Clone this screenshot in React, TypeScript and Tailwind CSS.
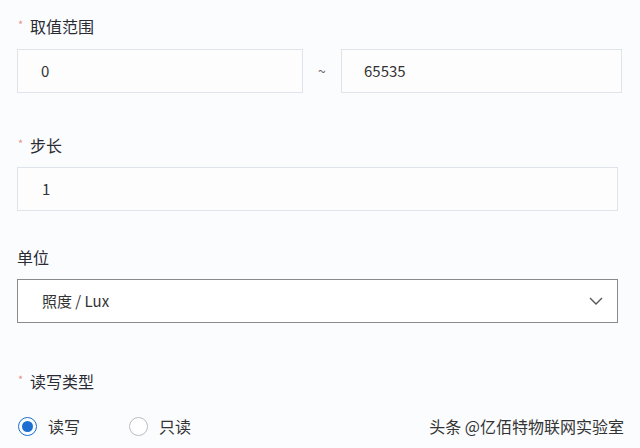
import React from 'react';

const font = { fontFamily: '"Noto Sans CJK SC", "Noto Sans", sans-serif' };

const Label: React.FC<{ text: string; required?: boolean }> = ({ text, required }) => (
    <div className="flex items-center h-[22px] text-[16px] text-[#2a2a33]">
        {required && <span className="text-[#e8928a] text-[11px] w-[13px] pl-[1px] -mt-[4px]">*</span>}
        <span>{text}</span>
    </div>
);

const App: React.FC = () => {
    return (
        <div className="w-[640px] h-[448px] bg-[#fbfcfe] overflow-hidden pl-[17px] pr-[18px] pt-[15px]" style={font}>
            <Label text="取值范围" required />
            <div className="flex items-center mt-[12px]">
                <div className="w-[286px] h-[44px] border border-[#dfe3ea] bg-[#fdfdfe] flex items-center pl-[23px] text-[15px] text-[#333]">0</div>
                <div className="w-[38px] text-center text-[14px] text-[#666]">~</div>
                <div className="w-[281px] h-[44px] border border-[#dfe3ea] bg-[#fdfdfe] flex items-center pl-[22px] text-[15px] text-[#333]">65535</div>
            </div>

            <div className="mt-[41px]">
                <Label text="步长" required />
            </div>
            <div className="mt-[11px] w-[601px] h-[44px] border border-[#dfe3ea] bg-[#fdfdfe] flex items-center pl-[24px] text-[15px] text-[#333]">1</div>

            <div className="mt-[35px]">
                <Label text="单位" />
            </div>
            <div className="mt-[11px] w-[601px] h-[44px] border border-[#8a8a8e] bg-white flex items-center justify-between pl-[24px] pr-[12px] text-[15px] text-[#333]">
                <span>照度 / Lux</span>
                <svg width="18" height="18" viewBox="0 0 18 18" fill="none" stroke="#555" strokeWidth="1.4">
                    <path d="M3 6 L9 12 L15 6" />
                </svg>
            </div>

            <div className="mt-[47px]">
                <Label text="读写类型" required />
            </div>
            <div className="mt-[22px] flex items-center text-[16px] text-[#333]">
                <div className="flex items-center">
                    <span className="w-[19px] h-[19px] rounded-full border-[1.5px] border-[#1a6fd0] flex items-center justify-center ml-[1px]">
                        <span className="w-[11px] h-[11px] rounded-full bg-[#1a6fd0]" />
                    </span>
                    <span className="ml-[11px]">读写</span>
                </div>
                <div className="flex items-center ml-[49px]">
                    <span className="w-[19px] h-[19px] rounded-full border border-[#b9bcc2] bg-white" />
                    <span className="ml-[11px]">只读</span>
                </div>
                <div className="ml-auto mr-[-2px] text-[16px] text-[#333]">头条 @亿佰特物联网实验室</div>
            </div>
        </div>
    );
};

export default App;
